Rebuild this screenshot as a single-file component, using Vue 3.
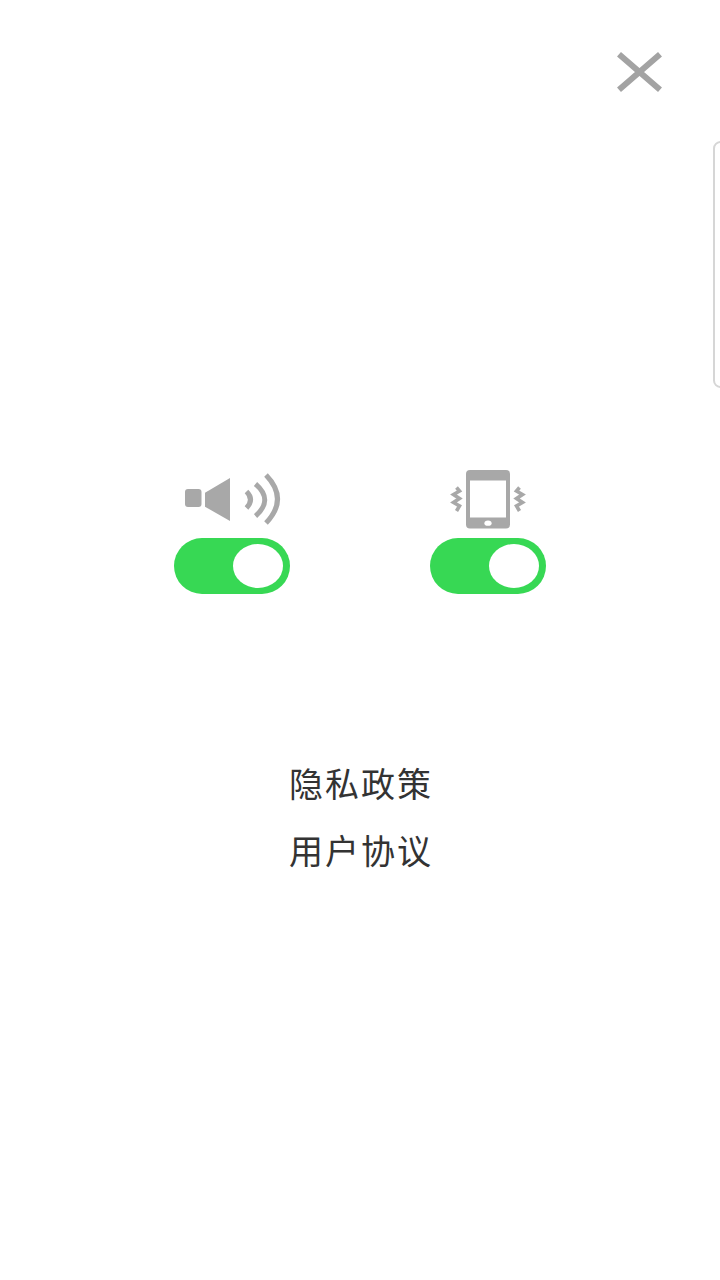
<script setup>
import { ref } from 'vue'

const soundOn = ref(true)
const vibrateOn = ref(true)
const links = ['隐私政策', '用户协议']
</script>

<template>
  <div class="settings">
    <div class="settings__edge-handle"></div>

    <div class="settings__header">
      <button class="settings__close" type="button" aria-label="关闭">
        <svg width="50" height="44" viewBox="0 0 50 44">
          <path d="M4 4.2 L45 39.8 M45 4.2 L4 39.8" fill="none" stroke="#a3a3a3" stroke-width="6" />
        </svg>
      </button>
    </div>

    <div class="settings__switches">
      <div class="switch-item">
        <svg class="switch-item__icon" width="116" height="60" viewBox="0 0 116 60">
          <rect x="11" y="20" width="16.5" height="18" rx="3" fill="#a8a8a8" />
          <path d="M31 23.7 L56 9 V52 L31 37.7 Z" fill="#a8a8a8" />
          <g fill="none" stroke="#a8a8a8" stroke-width="5">
            <path d="M72.5 22.5 Q80.5 30.5 72.5 39" />
            <path d="M81.5 15 Q100 31 81.5 47" />
            <path d="M92 6 Q115 30 92 54" />
          </g>
        </svg>
        <button class="switch" :class="{ 'is-on': soundOn }" type="button" @click="soundOn = !soundOn">
          <span class="switch__knob"></span>
        </button>
      </div>

      <div class="switch-item">
        <svg class="switch-item__icon" width="116" height="60" viewBox="0 0 116 60">
          <path
            fill-rule="evenodd"
            fill="#a8a8a8"
            d="M40 1 H76 Q80 1 80 5 V55.5 Q80 59.5 76 59.5 H40 Q36 59.5 36 55.5 V5 Q36 1 40 1 Z M40 11.5 V48.5 H76 V11.5 Z"
          />
          <ellipse cx="58" cy="54.2" rx="3.6" ry="2.6" fill="#fff" />
          <g fill="none" stroke="#a8a8a8" stroke-width="3.6">
            <path d="M26.5 18.5 L29.5 22 L23.5 25.5 L29.5 29.5 L23.5 33.5 L29.5 37 L26.5 42" />
            <path d="M89.5 18.5 L86.5 22 L92.5 25.5 L86.5 29.5 L92.5 33.5 L86.5 37 L89.5 42" />
          </g>
        </svg>
        <button class="switch" :class="{ 'is-on': vibrateOn }" type="button" @click="vibrateOn = !vibrateOn">
          <span class="switch__knob"></span>
        </button>
      </div>
    </div>

    <div class="settings__links">
      <a v-for="link in links" :key="link" class="settings__link">{{ link }}</a>
    </div>
  </div>
</template>

<style scoped>
.settings {
  position: relative;
  width: 720px;
  height: 1280px;
  overflow: hidden;
  background: #fff;
  font-family: "Noto Sans CJK SC", "Noto Sans", sans-serif;
}

.settings__edge-handle {
  position: absolute;
  top: 141px;
  right: -8px;
  width: 15px;
  height: 247px;
  box-sizing: border-box;
  border: 2px solid #d6d6d6;
  border-radius: 9px;
  background: #fff;
}

.settings__header {
  display: flex;
  justify-content: flex-end;
  padding: 50px 55px 0 0;
}

.settings__close {
  display: block;
  height: 44px;
  padding: 0;
  border: 0;
  background: none;
}

.settings__close svg,
.switch-item__icon {
  display: block;
}

.settings__switches {
  display: flex;
  justify-content: center;
  gap: 140px;
  margin-top: 375px;
}

.switch-item {
  display: flex;
  flex-direction: column;
  gap: 9px;
  width: 116px;
}

.switch {
  display: flex;
  align-items: center;
  justify-content: flex-start;
  width: 116px;
  height: 56px;
  padding: 0 7px;
  border: 0;
  border-radius: 28px;
  background: #c9c9c9;
}

.switch.is-on {
  justify-content: flex-end;
  background: #37d854;
}

.switch__knob {
  display: block;
  width: 50px;
  height: 44px;
  border-radius: 50%;
  background: #fff;
}

.settings__links {
  display: flex;
  flex-direction: column;
  align-items: center;
  margin-top: 155px;
}

.settings__link {
  padding-left: 2px;
  color: #333;
  font-size: 34px;
  line-height: 67px;
  letter-spacing: 2px;
}
</style>
